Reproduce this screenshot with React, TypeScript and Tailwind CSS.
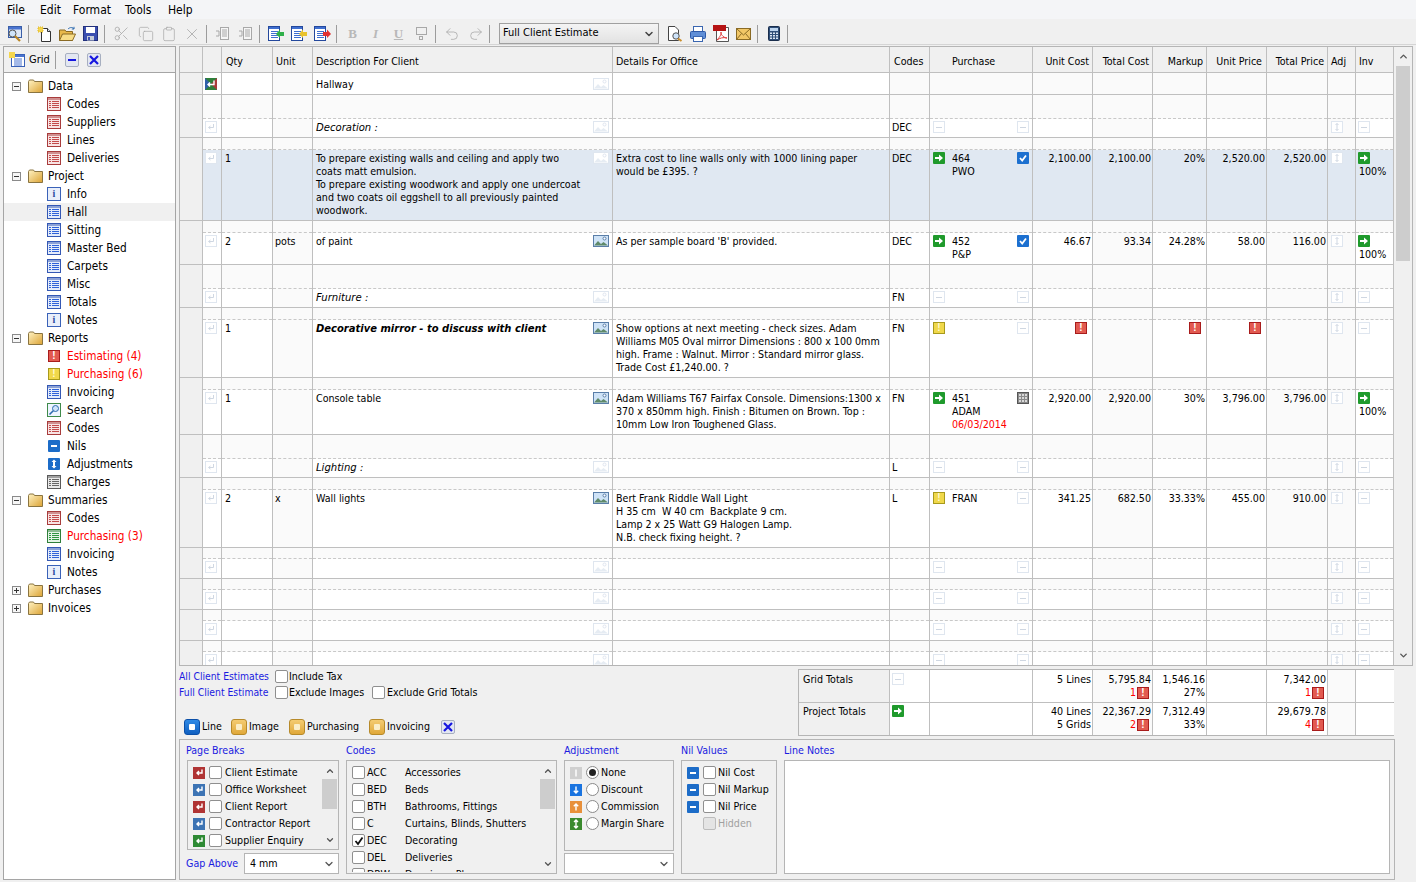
import type { ReactNode } from "react";
import { ChevronDown, ChevronUp, Copy, Clipboard, Redo2, Scissors, Undo2, X } from "lucide-react";

const GRID_COLS = "grid grid-cols-[23px_19px_51px_40px_300px_277px_40px_103px_60px_60px_54px_60px_61px_28px_38px]";
const LINE = "border-[#bfbfbf]";
const SHADED = [false, false, false, true, false, false, false, false, false, true, false, false, true, true, false];

type Tone = "red" | "blue" | "green" | "gray";

const toneColors: Record<Tone, { edge: string; fill: string; tint: string }> = {
  red: { edge: "#a83c3c", fill: "#c24a4a", tint: "#f8e4e4" },
  blue: { edge: "#3458b4", fill: "#2f62d8", tint: "#e4ecfa" },
  green: { edge: "#2f7f3a", fill: "#2f9440", tint: "#e4f4e6" },
  gray: { edge: "#5a5a5a", fill: "#666", tint: "#e8e8e8" },
};

function TableIcon({ tone }: { tone: Tone }) {
  const c = toneColors[tone];
  return (
    <svg width="14" height="14" viewBox="0 0 14 14" className="shrink-0">
      <rect x="0.5" y="0.5" width="13" height="13" fill={c.tint} stroke={c.edge} />
      <rect x="1" y="1" width="12" height="2" fill={c.edge} opacity="0.5" />
      {[4, 6, 8, 10].map((y) => (
        <g key={y}>
          <rect x="2" y={y} width="2" height="1" fill={c.fill} />
          <rect x="5" y={y} width="7" height="1" fill={c.fill} />
        </g>
      ))}
    </svg>
  );
}

function Folder() {
  return (
    <svg width="15" height="14" viewBox="0 0 15 14" className="shrink-0">
      <defs>
        <linearGradient id="fold" x1="0" y1="0" x2="1" y2="1">
          <stop offset="0" stopColor="#fff3c4" />
          <stop offset="1" stopColor="#dca334" />
        </linearGradient>
      </defs>
      <path d="M0.5 2.5 L1.5 1 H5.5 L6.5 2.5 H14.5 V13.5 H0.5 Z" fill="url(#fold)" stroke="#8a7440" />
    </svg>
  );
}

function Expander({ open }: { open: boolean }) {
  return (
    <span className="flex h-[9px] w-[9px] shrink-0 items-center justify-center border border-[#8a8a8a] bg-[#f6f6f6]">
      <svg width="7" height="7" viewBox="0 0 7 7">
        <path d={open ? "M1 3.5H6" : "M1 3.5H6M3.5 1V6"} stroke="#333" />
      </svg>
    </span>
  );
}

function ReportBadge({ kind }: { kind: "bang-red" | "bang-yellow" | "search" | "nil" | "adjust" | "info" }) {
  if (kind === "search") {
    return (
      <svg width="14" height="14" viewBox="0 0 14 14" className="shrink-0">
        <rect x="0.5" y="0.5" width="13" height="13" fill="#eef5ff" stroke="#3f8a4a" />
        <circle cx="8.5" cy="5.5" r="3" fill="#cfe4fa" stroke="#2d6bb0" />
        <path d="M6.3 7.7 L2.5 11.5" stroke="#2d6bb0" strokeWidth="1.6" />
      </svg>
    );
  }
  if (kind === "info") {
    return (
      <span className="flex h-[14px] w-[14px] shrink-0 items-center justify-center border border-[#3a62b8] bg-[#e9effa] font-['Liberation_Serif',serif] text-[10px] font-bold leading-none text-[#2b4da0]">
        i
      </span>
    );
  }
  if (kind === "bang-red") return <Bang tone="red" />;
  if (kind === "bang-yellow") return <Bang tone="yellow" />;
  if (kind === "nil") return <NilBtn />;
  return (
    <span className="flex h-[12px] w-[12px] shrink-0 items-center justify-center rounded-[1px] bg-[#1c6cc8]">
      <svg width="8" height="10" viewBox="0 0 8 10">
        <path d="M4 0.5 L6.5 3 H5 V7 H6.5 L4 9.5 L1.5 7 H3 V3 H1.5 Z" fill="#fff" />
      </svg>
    </span>
  );
}

function Bang({ tone }: { tone: "red" | "yellow" }) {
  const cls =
    tone === "red"
      ? "border-[#a81c1c] bg-[#e25a50] text-white"
      : "border-[#a89a1c] bg-[#f0d84a] text-[#fff8d0]";
  return (
    <span
      className={`flex h-[12px] w-[12px] shrink-0 items-center justify-center border font-['Liberation_Sans',sans-serif] text-[10px] font-bold leading-none ${cls}`}
    >
      !
    </span>
  );
}

function GoArrow() {
  return (
    <span className="flex h-[12px] w-[12px] shrink-0 items-center justify-center rounded-[1px] bg-[#1f9a2c]">
      <svg width="10" height="10" viewBox="0 0 10 10">
        <path d="M1 4 H5 V1.5 L9 5 L5 8.5 V6 H1 Z" fill="#fff" />
      </svg>
    </span>
  );
}

function BlueCheck() {
  return (
    <span className="flex h-[12px] w-[12px] shrink-0 items-center justify-center rounded-[1px] bg-[#1c70d0]">
      <svg width="10" height="10" viewBox="0 0 10 10">
        <path d="M2 5 L4.2 7.5 L8 2.5" fill="none" stroke="#fff" strokeWidth="1.8" />
      </svg>
    </span>
  );
}

function NilBtn() {
  return (
    <span className="flex h-[12px] w-[12px] shrink-0 items-center justify-center rounded-[1px] bg-[#1c6cc8]">
      <span className="h-[2px] w-[6px] bg-white" />
    </span>
  );
}

function GrayCalc() {
  return (
    <span className="grid h-[12px] w-[12px] shrink-0 grid-cols-3 gap-px border border-[#555] bg-[#8a8a8a] p-px">
      {Array.from({ length: 9 }).map((_, i) => (
        <span key={i} className="bg-[#d8d8d8]" />
      ))}
    </span>
  );
}

function FaintBox({ children }: { children: ReactNode }) {
  return (
    <span className="flex h-[12px] w-[12px] shrink-0 items-center justify-center border border-[#dfe6ef] bg-white text-[#d4dce6]">
      {children}
    </span>
  );
}

function FaintMinus() {
  return (
    <FaintBox>
      <span className="h-px w-[6px] bg-[#cfd7e2]" />
    </FaintBox>
  );
}

function FaintReturn() {
  return (
    <FaintBox>
      <svg width="8" height="8" viewBox="0 0 8 8">
        <path d="M6.5 1 V4.5 H2 M3.5 3 L1.5 4.5 L3.5 6" fill="none" stroke="#cfd7e2" />
      </svg>
    </FaintBox>
  );
}

function FaintAdj() {
  return (
    <FaintBox>
      <svg width="6" height="8" viewBox="0 0 6 8">
        <path d="M3 0.5 V7.5 M1.5 2 L3 0.5 L4.5 2 M1.5 6 L3 7.5 L4.5 6" fill="none" stroke="#cfd7e2" />
      </svg>
    </FaintBox>
  );
}

function PicIcon({ faint }: { faint?: boolean }) {
  const edge = faint ? "#dfe6ef" : "#5a7ea8";
  const sky = faint ? "#fff" : "#cfe3f7";
  const land = faint ? "#e6ecf3" : "#5f8a6a";
  return (
    <svg width="16" height="12" viewBox="0 0 16 12" className="shrink-0">
      <rect x="0.5" y="0.5" width="15" height="11" fill={sky} stroke={edge} />
      <path d="M1 10.5 L5 6 L8 9 L10.5 7 L15 10.5 Z" fill={land} />
      <circle cx="11.5" cy="3.5" r="1.5" fill="#fff" stroke={edge} />
    </svg>
  );
}

function ReturnBadge({ bg }: { bg: string }) {
  return (
    <span style={{ background: bg }} className="flex h-[12px] w-[12px] shrink-0 items-center justify-center">
      <svg width="9" height="9" viewBox="0 0 9 9">
        <path d="M7 1.5 V5 H2.5 M4 3 L2 5 L4 7" fill="none" stroke="#fff" strokeWidth="1.4" />
      </svg>
    </span>
  );
}

function Glossy({ tone }: { tone: "blue" | "amber" }) {
  const cls =
    tone === "blue"
      ? "border-[#0b4fa8] from-[#2f8ae6] to-[#0f5fc0]"
      : "border-[#b78a2a] from-[#f4cc72] to-[#e0a838]";
  const dot = tone === "blue" ? "bg-white" : "bg-[#fbeec8]";
  return (
    <span className={`flex h-[16px] w-[16px] shrink-0 items-center justify-center rounded-[3px] border bg-gradient-to-b ${cls}`}>
      <span className={`h-[6px] w-[6px] rounded-[1px] ${dot}`} />
    </span>
  );
}

function SmallButton({ children }: { children: ReactNode }) {
  return (
    <span className="flex h-[14px] w-[14px] shrink-0 items-center justify-center rounded-[2px] border border-[#a7afc0] bg-[#e3e7f2]">
      {children}
    </span>
  );
}

const BlueX = () => (
  <svg width="10" height="10" viewBox="0 0 10 10">
    <path d="M1 1 L9 9 M9 1 L1 9" stroke="#1616e0" strokeWidth="2.2" />
  </svg>
);

/* toolbar */

function Sep() {
  return <span className="ml-[2px] mr-[4px] h-[18px] w-px shrink-0 bg-[#9c9c9c]" />;
}

function Nudge() {
  return <span className="w-px shrink-0" />;
}

function Slot({ children }: { children: ReactNode }) {
  return <span className="flex h-[20px] w-[23px] shrink-0 items-center justify-center">{children}</span>;
}

function DocIcon({ spark }: { spark?: boolean }) {
  return (
    <svg width="16" height="16" viewBox="0 0 16 16">
      <path d="M4.5 2.5 H10.5 L13.5 5.5 V15.5 H4.5 Z" fill="#fff" stroke="#333" />
      <path d="M10.5 2.5 V5.5 H13.5" fill="#dfe8f5" stroke="#333" />
      {spark && <rect x="1" y="1" width="5" height="5" fill="#f4d64e" stroke="#e0b520" strokeDasharray="1 1" />}
    </svg>
  );
}

function ListArrow({ color, dir }: { color: string; dir: "left" | "right" }) {
  return (
    <svg width="17" height="16" viewBox="0 0 17 16">
      <rect x="0.5" y="0.5" width="11" height="14" fill="#fff" stroke="#24489c" />
      <rect x="1" y="1" width="10" height="2" fill="#3f6fd0" />
      {[5, 7, 9, 11].map((y) => (
        <rect key={y} x="3" y={y} width="7" height="1" fill="#3f6fd0" />
      ))}
      <path
        d={dir === "left" ? "M16 6 H12 V3.5 L8 8 L12 12 V10 H16 Z" : "M9 6 H13 V3.5 L17 8 L13 12 V10 H9 Z"}
        fill={color}
      />
    </svg>
  );
}

function Toolbar() {
  const off = "#a8a8a8";
  return (
    <div className="flex h-[26px] items-center border-b border-[#d5d5d5] pl-[3px] pt-[4px]">
      <Slot>
        <svg width="17" height="17" viewBox="0 0 17 17">
          <rect x="2.5" y="1.5" width="13" height="11" fill="#dde7f6" stroke="#3a5fa8" />
          <rect x="3" y="2" width="12" height="2.5" fill="#4a74d0" />
          <circle cx="6.5" cy="8.5" r="3.5" fill="#cfe4fa" stroke="#555" />
          <path d="M9 11 L14 16" stroke="#b98524" strokeWidth="2.2" />
        </svg>
      </Slot>
      <Sep />
      <Slot><DocIcon spark /></Slot>
      <Slot>
        <svg width="17" height="16" viewBox="0 0 17 16">
          <path d="M0.5 4 H6 L7 5.5 H13.5 V14.5 H0.5 Z" fill="#e8b849" stroke="#8a6a24" />
          <path d="M3.5 8 H16.5 L13.5 14.5 H0.5 Z" fill="#f7dc86" stroke="#8a6a24" />
          <path d="M9 3 C11 1 14 1 15 3 M15 3 V0.8 M15 3 H12.8" fill="none" stroke="#2d6bb0" />
        </svg>
      </Slot>
      <Slot>
        <svg width="15" height="15" viewBox="0 0 15 15">
          <rect x="0.5" y="0.5" width="14" height="14" fill="#3b4fb0" stroke="#22307c" />
          <rect x="3" y="1" width="9" height="6" fill="#fff" />
          <rect x="4" y="10" width="7" height="4.5" fill="#c6ccd8" />
          <rect x="5" y="11" width="2" height="3" fill="#3b4fb0" />
        </svg>
      </Slot>
      <Sep />
      <Nudge />
      <Slot><Scissors size={17} color={off} strokeWidth={1.1} /></Slot>
      <Nudge />
      <Slot><Copy size={16} color={off} strokeWidth={1.1} /></Slot>
      <Slot><Clipboard size={16} color={off} strokeWidth={1.1} /></Slot>
      <Slot><X size={18} color={off} strokeWidth={1.1} /></Slot>
      <Nudge />
      <Sep />
      <Slot>
        <svg width="15" height="15" viewBox="0 0 15 15" fill="none" stroke={off}>
          <rect x="5.5" y="1.5" width="8" height="12" fill="#f6f6f6" />
          <path d="M7 4H12M7 6H12M7 8H12M7 10H12M1 5H4V10H1" />
        </svg>
      </Slot>
      <Slot>
        <svg width="15" height="15" viewBox="0 0 15 15" fill="none" stroke={off}>
          <rect x="5.5" y="1.5" width="8" height="12" fill="#f6f6f6" />
          <path d="M7 4H12M7 6H12M7 8H12M7 10H12M1 5H4V10H1" />
        </svg>
      </Slot>
      <Sep />
      <Nudge />
      <Slot><ListArrow color="#2fb04a" dir="left" /></Slot>
      <Slot><ListArrow color="#e8c22c" dir="left" /></Slot>
      <Slot><ListArrow color="#e03030" dir="right" /></Slot>
      <Sep />
      <Slot><span className="font-['Liberation_Serif',serif] text-[13px] font-bold text-[#b8b8b8]">B</span></Slot>
      <Slot><span className="font-['Liberation_Serif',serif] text-[13px] font-bold italic text-[#b8b8b8]">I</span></Slot>
      <Slot><span className="font-['Liberation_Serif',serif] text-[13px] font-bold text-[#b8b8b8] underline">U</span></Slot>
      <Slot>
        <svg width="13" height="15" viewBox="0 0 13 15" fill="none" stroke={off}>
          <rect x="1.5" y="1.5" width="10" height="7" />
          <rect x="4.5" y="10.5" width="3" height="3" />
        </svg>
      </Slot>
      <Sep />
      <Slot><Undo2 size={16} color={off} strokeWidth={1.2} /></Slot>
      <Nudge />
      <Slot><Redo2 size={16} color={off} strokeWidth={1.2} /></Slot>
      <Sep />
      <span className="w-[5px] shrink-0" />
      <div className="flex h-[21px] w-[160px] shrink-0 items-center justify-between border border-[#a0a0a0] bg-gradient-to-b from-[#f4f4f4] to-[#e2e2e2] pl-[3px] pr-[3px] text-[11px]">
        <span>Full Client Estimate</span>
        <ChevronDown size={12} strokeWidth={3} color="#444" />
      </div>
      <span className="w-[4px] shrink-0" />
      <Slot>
        <svg width="16" height="16" viewBox="0 0 16 16">
          <path d="M1.5 0.5 H8 L11.5 4 V14.5 H1.5 Z" fill="#fff" stroke="#444" />
          <circle cx="9" cy="10" r="3.2" fill="#cfe4fa" stroke="#555" />
          <path d="M11 12.5 L14.5 15" stroke="#c98d2a" strokeWidth="2" />
        </svg>
      </Slot>
      <Slot>
        <svg width="16" height="16" viewBox="0 0 16 16">
          <rect x="3.5" y="0.5" width="9" height="5" fill="#fff" stroke="#3a66b0" />
          <rect x="0.5" y="5.5" width="15" height="7" rx="1" fill="#5f8ed6" stroke="#2f5aa8" />
          <rect x="3.5" y="10.5" width="9" height="5" fill="#fff" stroke="#3a66b0" />
        </svg>
      </Slot>
      <Slot>
        <svg width="16" height="17" viewBox="0 0 16 17">
          <path d="M3.5 2.5 H15.5 V16.5 H3.5 Z" fill="#fff" stroke="#555" />
          <rect x="0" y="0" width="13" height="6" fill="#b51212" />
          <path d="M4 15 C7 12 9 8 8 7 C7 8 10 13 14 13 C10 12 7 13 4 15 Z" fill="none" stroke="#e03a3a" />
        </svg>
      </Slot>
      <Slot>
        <svg width="15" height="12" viewBox="0 0 15 12">
          <rect x="0.5" y="0.5" width="14" height="11" fill="#f2c766" stroke="#8a6a24" />
          <path d="M0.5 0.5 L7.5 7 L14.5 0.5 M0.5 11.5 L5.5 5.5 M14.5 11.5 L9.5 5.5" fill="none" stroke="#8a6a24" />
        </svg>
      </Slot>
      <Sep />
      <Slot>
        <svg width="12" height="15" viewBox="0 0 12 15">
          <rect x="0.5" y="0.5" width="11" height="14" rx="1" fill="#2e4e78" stroke="#1a2e4c" />
          <rect x="2" y="2" width="8" height="3" fill="#bcd4ee" />
          {[6.5, 9, 11.5].map((y) => (
            <g key={y} fill="#d8e4f2">
              <rect x="2" y={y} width="2" height="1.5" />
              <rect x="5" y={y} width="2" height="1.5" />
              <rect x="8" y={y} width="2" height="1.5" />
            </g>
          ))}
        </svg>
      </Slot>
      <Sep />
    </div>
  );
}

/* tree */

type TreeItem = { label: string; icon: ReactNode; alert?: boolean; active?: boolean };

const tree: { label: string; open: boolean; items: TreeItem[] }[] = [
  {
    label: "Data",
    open: true,
    items: [
      { label: "Codes", icon: <TableIcon tone="red" /> },
      { label: "Suppliers", icon: <TableIcon tone="red" /> },
      { label: "Lines", icon: <TableIcon tone="red" /> },
      { label: "Deliveries", icon: <TableIcon tone="red" /> },
    ],
  },
  {
    label: "Project",
    open: true,
    items: [
      { label: "Info", icon: <ReportBadge kind="info" /> },
      { label: "Hall", icon: <TableIcon tone="blue" />, active: true },
      { label: "Sitting", icon: <TableIcon tone="blue" /> },
      { label: "Master Bed", icon: <TableIcon tone="blue" /> },
      { label: "Carpets", icon: <TableIcon tone="blue" /> },
      { label: "Misc", icon: <TableIcon tone="blue" /> },
      { label: "Totals", icon: <TableIcon tone="blue" /> },
      { label: "Notes", icon: <ReportBadge kind="info" /> },
    ],
  },
  {
    label: "Reports",
    open: true,
    items: [
      { label: "Estimating (4)", icon: <ReportBadge kind="bang-red" />, alert: true },
      { label: "Purchasing (6)", icon: <ReportBadge kind="bang-yellow" />, alert: true },
      { label: "Invoicing", icon: <TableIcon tone="blue" /> },
      { label: "Search", icon: <ReportBadge kind="search" /> },
      { label: "Codes", icon: <TableIcon tone="red" /> },
      { label: "Nils", icon: <ReportBadge kind="nil" /> },
      { label: "Adjustments", icon: <ReportBadge kind="adjust" /> },
      { label: "Charges", icon: <TableIcon tone="gray" /> },
    ],
  },
  {
    label: "Summaries",
    open: true,
    items: [
      { label: "Codes", icon: <TableIcon tone="red" /> },
      { label: "Purchasing (3)", icon: <TableIcon tone="green" />, alert: true },
      { label: "Invoicing", icon: <TableIcon tone="blue" /> },
      { label: "Notes", icon: <ReportBadge kind="info" /> },
    ],
  },
  { label: "Purchases", open: false, items: [] },
  { label: "Invoices", open: false, items: [] },
];

function Sidebar() {
  return (
    <aside className="flex h-[834px] w-[173px] shrink-0 flex-col border border-[#a5a5a5] bg-white">
      <div className="flex h-[26px] shrink-0 items-center border-b border-[#a5a5a5] bg-[#f0f0f0] pl-[5px]">
        <svg width="16" height="15" viewBox="0 0 16 15" className="shrink-0">
          <rect x="2.5" y="2.5" width="13" height="12" fill="#fff" stroke="#3a62b8" />
          <rect x="3" y="3" width="12" height="2" fill="#4a74d0" />
          <path d="M5 7H13M5 9H13M5 11H13M5 13H13" stroke="#4a74d0" />
          <rect x="0" y="0" width="6" height="6" fill="#f4d64e" />
        </svg>
        <span className="ml-[4px] w-[18px] pt-[2px] text-[11px]">Grid</span>
        <span className="ml-[8px] mr-[9px] h-[18px] w-px bg-[#9c9c9c]" />
        <SmallButton>
          <span className="h-[2px] w-[8px] bg-[#1616e0]" />
        </SmallButton>
        <span className="w-[8px]" />
        <SmallButton>
          <BlueX />
        </SmallButton>
      </div>
      <div className="pt-[4px] text-[11.7px]">
        {tree.map((group) => (
          <div key={group.label}>
            <div className="flex h-[18px] items-center pl-[8px]">
              <Expander open={group.open} />
              <span className="w-[7px]" />
              <Folder />
              <span className="ml-[5px] pt-px">{group.label}</span>
            </div>
            {group.items.map((item) => (
              <div
                key={item.label}
                className={`flex h-[18px] items-center pl-[43px] ${item.active ? "bg-[#f0f0f0]" : ""}`}
              >
                <span className="flex w-[14px] justify-center">{item.icon}</span>
                <span className={`ml-[6px] pt-px ${item.alert ? "text-[#ff0000]" : ""}`}>{item.label}</span>
              </div>
            ))}
          </div>
        ))}
      </div>
    </aside>
  );
}

/* main grid */

type Row = {
  gap: number;
  h: number;
  selected?: boolean;
  marker?: ReactNode;
  topPad?: number;
  qty?: string;
  unit?: string;
  desc?: ReactNode;
  pic?: "faint" | "full";
  details?: ReactNode;
  code?: string;
  buyLeft?: ReactNode;
  buyText?: ReactNode;
  buyRight?: ReactNode;
  unitCost?: ReactNode;
  totalCost?: ReactNode;
  markup?: ReactNode;
  unitPrice?: ReactNode;
  totalPrice?: ReactNode;
  inv?: ReactNode;
  adj?: boolean;
  inset?: boolean;
};

const invDone = (
  <div className="flex flex-col">
    <GoArrow />
    <span className="mt-px pl-px">100%</span>
  </div>
);

const heading = (text: string) => <span className="text-[11.2px] italic">{text}</span>;
const redBang = (
  <span className="flex justify-end pr-[4px]">
    <Bang tone="red" />
  </span>
);

const rows: Row[] = [
  {
    gap: 0, h: 21, topPad: 5, marker: (
      <svg width="12" height="12" viewBox="0 0 12 12">
        <rect width="12" height="12" fill="#2f7f3a" />
        <path d="M0 0 L6 6 L0 12 Z" fill="#2f5fa8" />
        <path d="M12 0 L6 6 L12 12 Z" fill="#a83a3a" />
        <path d="M9 2.5 V6.5 H3.5 M5 4.5 L3 6.5 L5 8.5" fill="none" stroke="#fff" strokeWidth="1.4" />
      </svg>
    ), desc: "Hallway", pic: "faint", inset: true,
  },
  { gap: 24, h: 18, desc: heading("Decoration :"), pic: "faint", code: "DEC", buyLeft: <FaintMinus />, buyRight: <FaintMinus />, inv: <FaintMinus />, adj: true },
  {
    gap: 12, h: 70, selected: true, qty: "1",
    desc: (
      <>
        To prepare existing walls and ceiling and apply two
        <br />
        coats matt emulsion.
        <br />
        To prepare existing woodwork and apply one undercoat
        <br />
        and two coats oil eggshell to all previously painted
        <br />
        woodwork.
      </>
    ),
    pic: "faint",
    details: (
      <>
        Extra cost to line walls only with 1000 lining paper
        <br />
        would be £395. ?
      </>
    ),
    code: "DEC", buyLeft: <GoArrow />, buyText: (<>464<br />PWO</>), buyRight: <BlueCheck />,
    unitCost: "2,100.00", totalCost: "2,100.00", markup: "20%", unitPrice: "2,520.00", totalPrice: "2,520.00", inv: invDone, adj: true,
  },
  {
    gap: 12, h: 31, qty: "2", unit: "pots", desc: "of paint", pic: "full", details: "As per sample board 'B' provided.",
    code: "DEC", buyLeft: <GoArrow />, buyText: (<>452<br />P&amp;P</>), buyRight: <BlueCheck />,
    unitCost: "46.67", totalCost: "93.34", markup: "24.28%", unitPrice: "58.00", totalPrice: "116.00", inv: invDone, adj: true,
  },
  { gap: 24, h: 18, desc: heading("Furniture :"), pic: "faint", code: "FN", buyLeft: <FaintMinus />, buyRight: <FaintMinus />, inv: <FaintMinus />, adj: true },
  {
    gap: 12, h: 57, qty: "1", desc: <span className="text-[11.1px] font-bold italic">Decorative mirror - to discuss with client</span>, pic: "full",
    details: (
      <>
        Show options at next meeting - check sizes. Adam
        <br />
        Williams M05 Oval mirror Dimensions : 800 x 100 0mm
        <br />
        high. Frame : Walnut. Mirror : Standard mirror glass.
        <br />
        Trade Cost £1,240.00. ?
      </>
    ),
    code: "FN", buyLeft: <Bang tone="yellow" />, buyRight: <FaintMinus />, unitCost: redBang, markup: redBang, unitPrice: redBang, inv: <FaintMinus />, adj: true,
  },
  {
    gap: 12, h: 44, qty: "1", desc: "Console table", pic: "full",
    details: (
      <>
        Adam Williams T67 Fairfax Console. Dimensions:1300 x
        <br />
        370 x 850mm high. Finish : Bitumen on Brown. Top :
        <br />
        10mm Low Iron Toughened Glass.
      </>
    ),
    code: "FN", buyLeft: <GoArrow />, buyText: (<>451<br />ADAM<br /><span className="text-[#ff0000]">06/03/2014</span></>), buyRight: <GrayCalc />,
    unitCost: "2,920.00", totalCost: "2,920.00", markup: "30%", unitPrice: "3,796.00", totalPrice: "3,796.00", inv: invDone, adj: true,
  },
  { gap: 24, h: 18, desc: heading("Lighting :"), pic: "faint", code: "L", buyLeft: <FaintMinus />, buyRight: <FaintMinus />, inv: <FaintMinus />, adj: true },
  {
    gap: 12, h: 57, qty: "2", unit: "x", desc: "Wall lights", pic: "full",
    details: (
      <>
        Bert Frank Riddle Wall Light
        <br />
        H 35 cm&nbsp; W 40 cm&nbsp; Backplate 9 cm.
        <br />
        Lamp 2 x 25 Watt G9 Halogen Lamp.
        <br />
        N.B. check fixing height. ?
      </>
    ),
    code: "L", buyLeft: <Bang tone="yellow" />, buyText: "FRAN", buyRight: <FaintMinus />,
    unitCost: "341.25", totalCost: "682.50", markup: "33.33%", unitPrice: "455.00", totalPrice: "910.00", inv: <FaintMinus />, adj: true,
  },
  { gap: 11, h: 19, pic: "faint", buyLeft: <FaintMinus />, buyRight: <FaintMinus />, inv: <FaintMinus />, adj: true },
  { gap: 11, h: 19, pic: "faint", buyLeft: <FaintMinus />, buyRight: <FaintMinus />, inv: <FaintMinus />, adj: true },
  { gap: 11, h: 19, pic: "faint", buyLeft: <FaintMinus />, buyRight: <FaintMinus />, inv: <FaintMinus />, adj: true },
  { gap: 11, h: 19, pic: "faint", buyLeft: <FaintMinus />, buyRight: <FaintMinus />, inv: <FaintMinus />, adj: true },
];

function Cell({ row, index, className = "", children }: { row: Row; index: number; className?: string; children?: ReactNode }) {
  const shade = row.selected ? "bg-[#e0e8f2]" : SHADED[index] || (row.inset && index >= 6) ? "bg-[#fafafa]" : "bg-white";
  return (
    <div className={`flex flex-col border-r ${LINE}`}>
      {row.gap > 0 && <div style={{ height: row.gap }} className="shrink-0 border-b border-dashed border-[#c8c8c8] bg-[#fafafa]" />}
      <div style={{ height: row.h, paddingTop: row.topPad ?? 2 }} className={`overflow-hidden leading-[13px] ${shade} ${className}`}>
        {children}
      </div>
    </div>
  );
}

function Money({ row, index, children }: { row: Row; index: number; children?: ReactNode }) {
  return (
    <Cell row={row} index={index} className="pr-px text-right">
      {children}
    </Cell>
  );
}

function GridRow({ row }: { row: Row }) {
  return (
    <div className={`${GRID_COLS} border-b ${LINE}`}>
      <div className={`border-r ${LINE} bg-[#f0f0f0]`} />
      <Cell row={row} index={1} className="pl-[2px]">
        {row.marker ?? <FaintReturn />}
      </Cell>
      <Cell row={row} index={2} className="pl-[3px]">{row.qty}</Cell>
      <Cell row={row} index={3} className="pl-[2px]">{row.unit}</Cell>
      <Cell row={row} index={4} className="flex justify-between pl-[3px] pr-[3px]">
        <div className="whitespace-nowrap">{row.desc}</div>
        {row.pic && <PicIcon faint={row.pic === "faint"} />}
      </Cell>
      <Cell row={row} index={5} className="whitespace-nowrap pl-[3px]">{row.details}</Cell>
      <Cell row={row} index={6} className="pl-[2px]">{row.code}</Cell>
      <Cell row={row} index={7} className="flex items-start pl-[3px] pr-[3px]">
        <span className="w-[12px] shrink-0">{row.buyLeft}</span>
        <span className="ml-[7px] flex-1 whitespace-nowrap">{row.buyText}</span>
        {row.buyRight}
      </Cell>
      <Money row={row} index={8}>{row.unitCost}</Money>
      <Money row={row} index={9}>{row.totalCost}</Money>
      <Money row={row} index={10}>{row.markup}</Money>
      <Money row={row} index={11}>{row.unitPrice}</Money>
      <Money row={row} index={12}>{row.totalPrice}</Money>
      <Cell row={row} index={13} className="pl-[3px]">{row.adj && <FaintAdj />}</Cell>
      <Cell row={row} index={14} className="pl-[2px]">{row.inv}</Cell>
    </div>
  );
}

function GridHeader() {
  const heads = [
    { t: "", c: "" },
    { t: "", c: "" },
    { t: "Qty", c: "pl-[4px]" },
    { t: "Unit", c: "pl-[3px]" },
    { t: "Description For Client", c: "pl-[3px]" },
    { t: "Details For Office", c: "pl-[3px]" },
    { t: "Codes", c: "pl-[4px]" },
    { t: "Purchase", c: "pl-[22px]" },
    { t: "Unit Cost", c: "justify-end pr-[3px]" },
    { t: "Total Cost", c: "justify-end pr-[3px]" },
    { t: "Markup", c: "justify-end pr-[3px]" },
    { t: "Unit Price", c: "justify-end pr-[4px]" },
    { t: "Total Price", c: "justify-end pr-[3px]" },
    { t: "Adj", c: "pl-[3px]" },
    { t: "Inv", c: "pl-[3px]" },
  ];
  return (
    <div className={`${GRID_COLS} h-[26px] shrink-0 border-b ${LINE} bg-[#f0f0f0]`}>
      {heads.map((h, i) => (
        <div key={i} className={`flex items-center whitespace-nowrap border-r ${LINE} pt-[4px] ${h.c}`}>
          {h.t}
        </div>
      ))}
    </div>
  );
}

function VScroll() {
  return (
    <div className="flex w-[18px] shrink-0 flex-col bg-[#f0f0f0]">
      <div className="flex h-[19px] items-center justify-center">
        <ChevronUp size={11} strokeWidth={3} color="#555" />
      </div>
      <div className="mx-[2px] h-[195px] bg-[#cdcdcd]" />
      <div className="flex-1" />
      <div className="flex h-[19px] items-center justify-center">
        <ChevronDown size={11} strokeWidth={3} color="#555" />
      </div>
    </div>
  );
}

function EstimateGrid() {
  return (
    <div className="flex h-[620px] w-[1234px] shrink-0 border border-[#b5b5b5] bg-[#f0f0f0]">
      <div className="w-[1214px] shrink-0 overflow-hidden">
        <GridHeader />
        {rows.map((row, i) => (
          <GridRow key={i} row={row} />
        ))}
      </div>
      <VScroll />
    </div>
  );
}

/* bottom */

function Check({ on, disabled }: { on?: boolean; disabled?: boolean }) {
  return (
    <span className={`flex h-[13px] w-[13px] shrink-0 items-center justify-center rounded-[2px] border ${disabled ? "border-[#bcbcbc] bg-[#e4e4e4]" : "border-[#8f8f8f] bg-white"}`}>
      {on && (
        <svg width="10" height="10" viewBox="0 0 10 10">
          <path d="M1.5 5 L4 8 L8.5 1.5" fill="none" stroke="#111" strokeWidth="1.8" />
        </svg>
      )}
    </span>
  );
}

function Radio({ on }: { on?: boolean }) {
  return (
    <span className="flex h-[13px] w-[13px] shrink-0 items-center justify-center rounded-full border border-[#8a8a8a] bg-white">
      {on && <span className="h-[7px] w-[7px] rounded-full bg-[#222]" />}
    </span>
  );
}

function TotalsRow({ label, first, cells, last }: { label: string; first: ReactNode; cells: ReactNode[]; last?: boolean }) {
  const shaded = [false, true, false, false, false];
  const rowCls = last ? "h-[32px] [&>div]:pt-[2px]" : `h-[33px] border-b ${LINE} [&>div]:pt-[3px]`;
  return (
    <div className={`grid grid-cols-[91px_40px_103px_60px_60px_54px_60px_61px_28px_38px] leading-[13px] ${rowCls}`}>
      <div className={`border-r ${LINE} bg-[#f0f0f0] pl-[4px]`}>{label}</div>
      <div className={`border-r ${LINE} bg-white pl-[2px]`}>{first}</div>
      <div className={`border-r ${LINE} bg-white`} />
      {cells.map((c, i) => (
        <div key={i} className={`whitespace-nowrap border-r ${LINE} pr-px text-right ${shaded[i] ? "bg-[#fafafa]" : "bg-white"}`}>
          {c}
        </div>
      ))}
      <div className={`border-r ${LINE} bg-[#fafafa]`} />
      <div className="bg-white" />
    </div>
  );
}

const countBang = (n: string) => (
  <span className="flex items-center justify-end gap-px pr-[2px] text-[#ff0000]">
    {n}
    <Bang tone="red" />
  </span>
);

function Totals() {
  return (
    <div className="mt-[3px] h-[67px] w-[596px] shrink-0 border border-[#b5b5b5]">
      <TotalsRow
        label="Grid Totals"
        first={<FaintMinus />}
        cells={[
          "5 Lines",
          <>5,795.84{countBang("1")}</>,
          <>1,546.16<br />27%</>,
          "",
          <>7,342.00{countBang("1")}</>,
        ]}
      />
      <TotalsRow
        label="Project Totals"
        first={<GoArrow />}
        last
        cells={[
          <>40 Lines<br />5 Grids</>,
          <>22,367.29{countBang("2")}</>,
          <>7,312.49<br />33%</>,
          "",
          <>29,679.78{countBang("4")}</>,
        ]}
      />
    </div>
  );
}

function Options() {
  return (
    <div className="w-[619px] shrink-0">
      <div className="mt-[3px] flex h-[15px] items-center">
        <a className="w-[96px] whitespace-nowrap text-[10.3px] text-[#1a1ae0]">All Client Estimates</a>
        <Check />
        <span className="ml-px">Include Tax</span>
      </div>
      <div className="mt-px flex h-[15px] items-center">
        <a className="w-[96px] whitespace-nowrap text-[10.3px] text-[#1a1ae0]">Full Client Estimate</a>
        <Check />
        <span className="ml-px w-[83px] whitespace-nowrap">Exclude Images</span>
        <Check />
        <span className="ml-[2px] whitespace-nowrap">Exclude Grid Totals</span>
      </div>
      <div className="mt-[18px] flex h-[18px] items-center pl-[5px]">
        <Glossy tone="blue" />
        <span className="ml-[2px] w-[29px]">Line</span>
        <Glossy tone="amber" />
        <span className="ml-[2px] w-[40px]">Image</span>
        <Glossy tone="amber" />
        <span className="ml-[2px] w-[62px]">Purchasing</span>
        <Glossy tone="amber" />
        <span className="ml-[2px] w-[54px]">Invoicing</span>
        <SmallButton><BlueX /></SmallButton>
      </div>
    </div>
  );
}

function Caption({ children }: { children: ReactNode }) {
  return <div className="h-[14px] leading-[14px] text-[#1a1ae0]">{children}</div>;
}

function MiniScroll() {
  return (
    <div className="flex w-[15px] shrink-0 flex-col items-center bg-[#f0f0f0]">
      <div className="flex h-[17px] items-center"><ChevronUp size={10} strokeWidth={3} color="#555" /></div>
      <div className="h-[30px] w-full bg-[#cdcdcd]" />
      <div className="flex-1" />
      <div className="flex h-[17px] items-center"><ChevronDown size={10} strokeWidth={3} color="#555" /></div>
    </div>
  );
}

function Select({ value, w }: { value?: string; w: string }) {
  return (
    <div className={`flex h-[21px] items-center justify-between border border-[#b5b5b5] bg-white pl-[5px] pr-[3px] ${w}`}>
      <span>{value}</span>
      <ChevronDown size={12} strokeWidth={2.5} color="#555" />
    </div>
  );
}

const breaks: [string, string][] = [
  ["#b03434", "Client Estimate"],
  ["#3d74b4", "Office Worksheet"],
  ["#b03434", "Client Report"],
  ["#3d74b4", "Contractor Report"],
  ["#2e8a34", "Supplier Enquiry"],
];

const codes: [string, string, boolean?][] = [
  ["ACC", "Accessories"],
  ["BED", "Beds"],
  ["BTH", "Bathrooms, Fittings"],
  ["C", "Curtains, Blinds, Shutters"],
  ["DEC", "Decorating", true],
  ["DEL", "Deliveries"],
  ["DRW", "Drawings, Plans"],
];

const adjustments: { label: string; bg: string; on?: boolean; d: string }[] = [
  { label: "None", bg: "#cfcfcf", on: true, d: "M5 1.5 V8.5" },
  { label: "Discount", bg: "#1a74e0", d: "M5 1.5 V8 M2.8 5.8 L5 8 L7.2 5.8" },
  { label: "Commission", bg: "#e8903a", d: "M5 8.5 V2 M2.8 4.2 L5 2 L7.2 4.2" },
  { label: "Margin Share", bg: "#3a8a2e", d: "M5 1 V9 M3 3 L5 1 L7 3 M3 7 L5 9 L7 7" },
];

const nils = ["Nil Cost", "Nil Markup", "Nil Price"];

function LowerPanel() {
  return (
    <div className="mt-[3px] flex h-[141px] w-[1216px] shrink-0 gap-[7px] border border-[#b5b5b5] pl-[7px] pt-[3px]">
      <div className="w-[152px] shrink-0">
        <Caption>
          <span className="-ml-px">Page Breaks</span>
        </Caption>
        <div className="mt-[3px] flex h-[90px] border border-[#b5b5b5] p-px pl-[5px]">
          <div className="flex-1 pt-[2px]">
            {breaks.map(([bg, label]) => (
              <div key={label} className="flex h-[17px] items-center">
                <ReturnBadge bg={bg} />
                <span className="ml-[4px]"><Check /></span>
                <span className="ml-[3px] whitespace-nowrap">{label}</span>
              </div>
            ))}
          </div>
          <MiniScroll />
        </div>
        <div className="mt-[3px] flex items-center justify-between">
          <span className="-ml-px whitespace-nowrap text-[#1a1ae0]">Gap Above</span>
          <Select value="4 mm" w="w-[95px]" />
        </div>
      </div>
      <div className="w-[211px] shrink-0">
        <Caption>Codes</Caption>
        <div className="mt-[3px] flex h-[114px] overflow-hidden border border-[#b5b5b5] p-px pl-[5px]">
          <div className="flex-1 overflow-hidden pt-[2px]">
            {codes.map(([code, label, on]) => (
              <div key={code} className="flex h-[17px] items-center">
                <Check on={on} />
                <span className="ml-[2px] w-[38px]">{code}</span>
                <span className="whitespace-nowrap">{label}</span>
              </div>
            ))}
          </div>
          <MiniScroll />
        </div>
      </div>
      <div className="w-[110px] shrink-0">
        <Caption>Adjustment</Caption>
        <div className="mt-[3px] h-[91px] border border-[#b5b5b5] pl-[5px] pt-[3px]">
          {adjustments.map((a) => (
            <div key={a.label} className="flex h-[17px] items-center">
              <span style={{ background: a.bg }} className="flex h-[12px] w-[12px] shrink-0 items-center justify-center">
                <svg width="10" height="10" viewBox="0 0 10 10">
                  <path d={a.d} fill="none" stroke="#fff" strokeWidth="1.4" />
                </svg>
              </span>
              <span className="ml-[4px]"><Radio on={a.on} /></span>
              <span className="ml-[2px] whitespace-nowrap">{a.label}</span>
            </div>
          ))}
        </div>
        <div className="mt-[2px]">
          <Select w="w-[110px]" />
        </div>
      </div>
      <div className="w-[96px] shrink-0">
        <Caption>Nil Values</Caption>
        <div className="mt-[3px] h-[114px] border border-[#b5b5b5] pl-[5px] pt-[3px]">
          {nils.map((n) => (
            <div key={n} className="flex h-[17px] items-center">
              <NilBtn />
              <span className="ml-[4px]"><Check /></span>
              <span className="ml-[2px] whitespace-nowrap">{n}</span>
            </div>
          ))}
          <div className="flex h-[17px] items-center pl-[16px] text-[#a0a0a0]">
            <Check disabled />
            <span className="ml-[2px]">Hidden</span>
          </div>
        </div>
      </div>
      <div className="flex-1 pr-[4px]">
        <Caption>Line Notes</Caption>
        <div className="mt-[3px] h-[114px] border border-[#b5b5b5] bg-white" />
      </div>
    </div>
  );
}

export default function App() {
  return (
    <div className="h-[882px] w-[1416px] overflow-hidden bg-[#f0f0f0] font-['DejaVu_Sans_Condensed','DejaVu_Sans',sans-serif] text-[10.6px] text-black">
      <div className="flex h-[19px] items-center bg-[#f4f5f7] pl-[7px] text-[12px]">
        <span className="w-[33px]">File</span>
        <span className="w-[33px]">Edit</span>
        <span className="w-[52px]">Format</span>
        <span className="w-[43px]">Tools</span>
        <span>Help</span>
      </div>
      <Toolbar />
      <div className="flex gap-[3px] pl-[3px] pt-px">
        <Sidebar />
        <div className="flex flex-col">
          <EstimateGrid />
          <div className="flex">
            <Options />
            <Totals />
          </div>
          <LowerPanel />
        </div>
      </div>
    </div>
  );
}
